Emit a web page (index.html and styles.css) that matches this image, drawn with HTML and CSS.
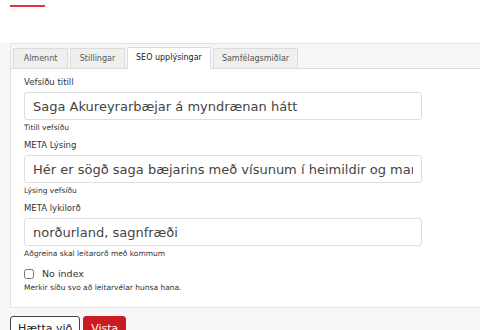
FILE: index.html
```html
<!DOCTYPE html>
<html lang="is">
<head>
    <meta charset="UTF-8">
    <meta name="viewport" content="width=device-width, initial-scale=1.0">
    <title>SEO upplýsingar</title>
    <link rel="stylesheet" href="styles.css">
</head>
<body>
    <div class="top-bar">
        <span class="accent-line"></span>
    </div>

    <!-- Edit panel -->
    <div class="panel">
        <ul class="tabs">
            <li class="tab">Almennt</li>
            <li class="tab">Stillingar</li>
            <li class="tab active">SEO upplýsingar</li>
            <li class="tab">Samfélagsmiðlar</li>
        </ul>

        <form class="tab-content">
            <div class="field">
                <label for="seoTitle">Vefsíðu titill</label>
                <input type="text" id="seoTitle" value="Saga Akureyrarbæjar á myndrænan hátt">
                <p class="help">Titill vefsíðu</p>
            </div>

            <div class="field">
                <label for="seoDesc">META Lýsing</label>
                <input type="text" id="seoDesc" value="Hér er sögð saga bæjarins með vísunum í heimildir og margvíslegar myndir">
                <p class="help">Lýsing vefsíðu</p>
            </div>

            <div class="field">
                <label for="seoKeywords">META lykilorð</label>
                <input type="text" id="seoKeywords" value="norðurland, sagnfræði">
                <p class="help">Aðgreina skal leitarorð með kommum</p>
            </div>

            <div class="field check-field">
                <label class="check-label" for="noIndex">
                    <input type="checkbox" id="noIndex">
                    <span>No index</span>
                </label>
                <p class="help">Merkir síðu svo að leitarvélar hunsa hana.</p>
            </div>
        </form>
    </div>

    <div class="actions">
        <button type="button" class="btn btn-cancel">Hætta við</button>
        <button type="button" class="btn btn-save">Vista</button>
    </div>
</body>
</html>
```

FILE: styles.css
```css
html, body {
    height: 100%;
}
body {
    margin: 0;
    font-family: "DejaVu Sans", Verdana, sans-serif;
    color: #333;
    background-color: #f7f7f7;
    overflow: hidden;
}
.top-bar {
    background: #fff;
    height: 43px;
    padding-left: 10px;
}
.accent-line {
    display: block;
    width: 35px;
    height: 2px;
    background: #e4343b;
    position: relative;
    top: 5px;
}
.panel {
    margin-left: 10px;
    width: 500px;
    background: #fff;
    border: 1px solid #e2e2e2;
}
.tabs {
    list-style: none;
    margin: 0;
    padding: 4px 2px 0;
    display: flex;
    gap: 2px;
    background: #f6f6f6;
    border-bottom: 1px solid #dcdcdc;
}
.tab {
    min-width: 37px;
    text-align: center;
    height: 19px;
    line-height: 19px;
    padding: 0 8px;
    font-size: 8px;
    color: #555;
    background: #efefef;
    border: 1px solid #dcdcdc;
    margin-bottom: -1px;
}
.tab.active {
    background: #fff;
    color: #222;
    border-bottom-color: #fff;
    height: 20px;
    margin-top: -1px;
}
.tab-content {
    padding: 8px 13px 14px;
}
.field {
    margin-bottom: 7px;
}
label {
    display: block;
    font-size: 8.5px;
    line-height: 11px;
    margin-bottom: 4px;
    color: #333;
}
input[type="text"] {
    display: block;
    box-sizing: border-box;
    width: 398px;
    height: 28px;
    padding: 0 8px;
    border: 1px solid #dedede;
    border-radius: 3px;
    font-family: "DejaVu Sans", Verdana, sans-serif;
    font-size: 13px;
    color: #444;
    background: #fff;
}
.help {
    margin: 3px 0 0;
    font-size: 7.5px;
    line-height: 10px;
    color: #333;
}
.check-field {
    margin-top: 9px;
    margin-bottom: 0;
}
.check-label {
    display: flex;
    align-items: center;
    gap: 8px;
    font-size: 9.5px;
    margin-bottom: 4px;
}
.check-label input {
    margin: 0;
    width: 10px;
    height: 10px;
}
.actions {
    display: flex;
    gap: 3px;
    padding: 8px 10px;
}
.btn {
    font-family: "DejaVu Sans", Verdana, sans-serif;
    font-size: 11px;
    height: 24px;
    padding: 0 7px;
    border-radius: 3px;
    cursor: pointer;
}
.btn-cancel {
    background: #fff;
    color: #222;
    border: 1px solid #444;
}
.btn-save {
    background: #cc1a22;
    color: #fff;
    border: 1px solid #cc1a22;
}
```
